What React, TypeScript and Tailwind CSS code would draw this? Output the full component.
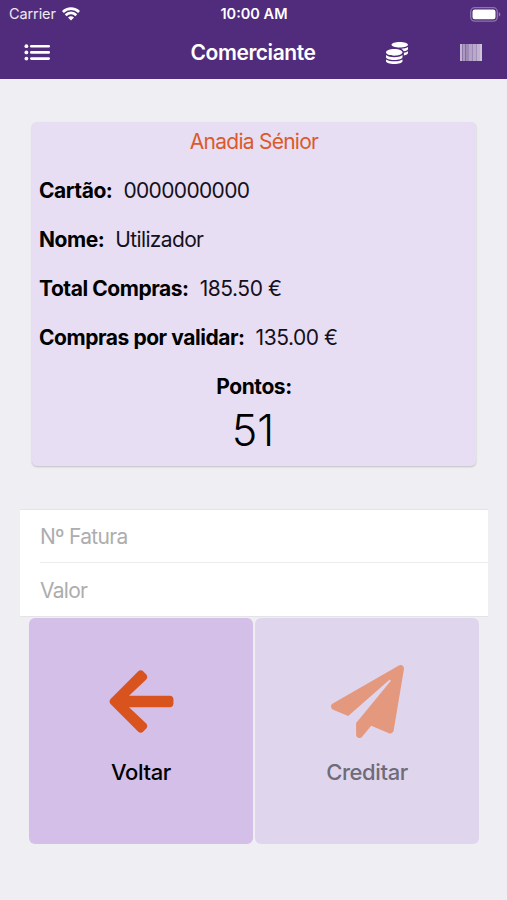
import type { ReactNode } from 'react'
import { FaArrowLeft, FaCoins, FaPaperPlane } from 'react-icons/fa'

const rows = [
  { label: 'Cartão:', value: '0000000000', spacing: 'tracking-[-0.65px]' },
  { label: 'Nome:', value: 'Utilizador', spacing: 'tracking-[-0.65px]' },
  { label: 'Total Compras:', value: '185.50 €', spacing: 'tracking-[-0.45px]' },
  { label: 'Compras por validar:', value: '135.00 €', spacing: 'tracking-[-0.45px]' },
]

function WifiIcon() {
  return (
    <svg width="18" height="14" viewBox="0 0 18 14" fill="none" stroke="#fff" strokeWidth="2.7">
      <path d="M0.9 5a11.5 11.5 0 0 1 16.2 0" />
      <path d="M3.7 8.2a7.4 7.4 0 0 1 10.6 0" />
      <path d="M9 13.6 6 10.6a4.3 4.3 0 0 1 6 0z" fill="#fff" stroke="none" />
    </svg>
  )
}

function BatteryIcon() {
  return (
    <svg width="31" height="15" viewBox="0 0 31 15" fill="none">
      <rect x="0.7" y="0.7" width="26.6" height="13.4" rx="4" stroke="#fff" strokeOpacity="0.35" strokeWidth="1.3" />
      <rect x="2.5" y="2.5" width="23" height="9.8" rx="2.2" fill="#fff" />
      <path d="M28.8 5.2c2 .6 2 3.8 0 4.4z" fill="#fff" fillOpacity="0.4" />
    </svg>
  )
}

function MenuIcon() {
  return (
    <svg width="26" height="17" viewBox="0 0 26 17" fill="#fff">
      {[2.2, 8.4, 14.6].map((y) => (
        <g key={y}>
          <circle cx="2.4" cy={y} r="1.9" />
          <rect x="6" y={y - 1.3} width="20" height="2.6" rx="1.3" />
        </g>
      ))}
    </svg>
  )
}

// [x, width, opacity]
const bars = [
  [0, 2, 0.65],
  [2, 1, 0.35],
  [3, 2, 0.52],
  [5, 1, 0.3],
  [6, 3, 0.45],
  [9, 3, 0.57],
  [12, 1, 0.45],
  [13, 3, 0.6],
  [16, 1, 0.48],
  [17, 3, 0.64],
  [20, 2, 0.72],
]

function BarcodeIcon() {
  return (
    <svg width="22" height="17" viewBox="0 0 22 17" fill="#fff">
      {bars.map(([x, width, opacity]) => (
        <rect key={x} x={x} width={width} height="17" fillOpacity={opacity} />
      ))}
    </svg>
  )
}

function Header() {
  return (
    <header className="h-[79px] bg-[#512b7c] text-white">
      <div className="grid h-7 grid-cols-3 items-center pl-[9px] pr-[6px]">
        <div className="flex items-center gap-[6px]">
          <span className="text-[14.5px] tracking-[-0.1px] text-white/90">Carrier</span>
          <WifiIcon />
        </div>
        <span className="pr-0.5 text-center text-[14.5px] font-semibold">10:00 AM</span>
        <div className="flex justify-end">
          <BatteryIcon />
        </div>
      </div>
      <div className="grid h-[49px] grid-cols-3 items-center pl-6 pr-[25px]">
        <MenuIcon />
        <h1 className="text-center text-[21px] font-semibold tracking-[-0.45px]">Comerciante</h1>
        <div className="flex items-center justify-end gap-[52px]">
          <FaCoins size={22} />
          <BarcodeIcon />
        </div>
      </div>
    </header>
  )
}

function PointsCard() {
  return (
    <section className="ml-8 mr-[31px] mt-[43px] h-[344px] rounded-[5px] bg-[#e7def3] text-[21px] shadow-[0_1px_2px_rgba(0,0,0,0.2)]">
      <h2 className="flex h-[44px] items-center justify-center pb-1 tracking-[-0.75px] text-[#db5a2b]">
        Anadia Sénior
      </h2>
      {rows.map((row) => (
        <p key={row.label} className="flex h-[49px] items-center gap-[11px] px-[7px]">
          <b className="font-bold tracking-[-0.45px]">{row.label}</b>
          <span className={`${row.spacing} text-[#15101c]`}>{row.value}</span>
        </p>
      ))}
      <p className="flex h-[49px] items-center justify-center font-bold tracking-[-0.4px]">Pontos:</p>
      <p className="pr-0.5 text-center text-[43px] font-light leading-[38px]">51</p>
    </section>
  )
}

function Field({ placeholder }: { placeholder: string }) {
  return (
    <input
      className="block h-[53px] w-full bg-transparent pt-px text-[21px] tracking-[-0.7px] outline-none placeholder:text-[#adadad]"
      placeholder={placeholder}
    />
  )
}

function ActionButton({ icon, label, disabled }: { icon: ReactNode; label: string; disabled?: boolean }) {
  return (
    <button
      disabled={disabled}
      className="flex h-[226px] flex-1 flex-col items-center rounded-[6px] bg-[#d4bfe9] pt-[47px] text-[22px] font-medium tracking-[-0.4px] text-[#d9531e] disabled:bg-[#dfd6ee] disabled:text-[#e4997e]"
    >
      {icon}
      <span className={disabled ? 'mt-[18px] text-[#706b78]' : 'mt-[18px] text-black'}>{label}</span>
    </button>
  )
}

export default function App() {
  return (
    <div className="h-[900px] w-[507px] overflow-hidden bg-[#efeef3] font-['Inter',sans-serif] text-black">
      <Header />
      <PointsCard />
      <form className="ml-5 mr-[19px] mt-[43px] border-y border-[#e4e3e8] bg-white pl-5">
        <div className="-mt-px border-b border-[#ececee]">
          <Field placeholder="Nº Fatura" />
        </div>
        <Field placeholder="Valor" />
      </form>
      <div className="ml-[29px] mr-[28px] mt-px flex gap-[2px]">
        <ActionButton icon={<FaArrowLeft size={73} />} label="Voltar" />
        <ActionButton icon={<FaPaperPlane size={73} />} label="Creditar" disabled />
      </div>
    </div>
  )
}
